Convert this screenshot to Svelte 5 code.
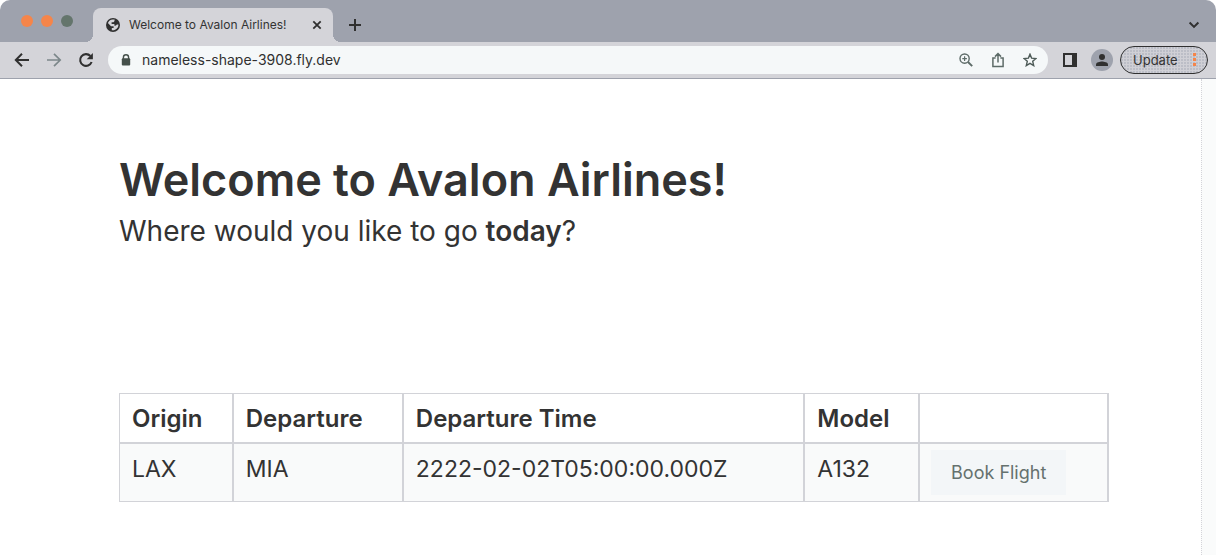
<script>
  const columns = [
    { label: 'Origin', width: 11.5 },
    { label: 'Departure', width: 17.2 },
    { label: 'Departure Time', width: 40.6 },
    { label: 'Model', width: 11.6 },
    { label: '', width: 19.1 }
  ];
  const flights = [
    { origin: 'LAX', departure: 'MIA', time: '2222-02-02T05:00:00.000Z', model: 'A132' }
  ];
  let address = $state('nameless-shape-3908.fly.dev');
</script>

<div class="window">
  <header class="chrome">
    <div class="tabstrip">
      <div class="lights">
        <span class="light"></span>
        <span class="light"></span>
        <span class="light zoomed"></span>
      </div>
      <div class="tab">
        <svg class="globe" width="14" height="14" viewBox="0 0 14 14" aria-hidden="true">
          <circle cx="7" cy="7" r="7" fill="#303030" />
          <path d="M8.6 1.6 H6.6 C4.4 1.8 2.6 3.2 1.9 5 L5 8.2 H7.6 V10 H5.8 V12.3 C9.6 12.8 12.6 10 12.4 6.6 H10.8 C10.4 7.6 9.2 8.2 8.4 7.4 V6 H5.6 V4.2 H7.4 C8.4 4 8.6 3 8.6 1.6 Z" fill="#d4d4d9" />
        </svg>
        <span class="title">Welcome to Avalon Airlines!</span>
        <button class="icon" aria-label="Close tab">
          <svg width="10" height="10" viewBox="0 0 10 10"><path d="M1.3 1.3 L8.7 8.7 M8.7 1.3 L1.3 8.7" stroke="#303030" stroke-width="1.8" fill="none" /></svg>
        </button>
      </div>
      <button class="icon newtab" aria-label="New tab">
        <svg width="14" height="14" viewBox="0 0 14 14"><path d="M7 1 V13 M1 7 H13" stroke="#303030" stroke-width="2" fill="none" /></svg>
      </button>
      <button class="icon tabsearch" aria-label="Search tabs">
        <svg width="12" height="8" viewBox="0 0 12 8"><path d="M1.6 1.5 L6 5.9 L10.4 1.5" stroke="#303030" stroke-width="2" fill="none" /></svg>
      </button>
    </div>

    <div class="toolbar">
      <nav class="history">
        <button class="icon" aria-label="Back">
          <svg width="16" height="16" viewBox="0 0 16 16"><path d="M15 8 H2 M8 1.8 L1.8 8 L8 14.2" stroke="#303030" stroke-width="2" fill="none" /></svg>
        </button>
        <button class="icon" aria-label="Forward">
          <svg width="16" height="16" viewBox="0 0 16 16"><path d="M1 8 H14 M8 1.8 L14.2 8 L8 14.2" stroke="#7c878a" stroke-width="1.7" fill="none" /></svg>
        </button>
        <button class="icon" aria-label="Reload">
          <svg width="16" height="16" viewBox="0 0 16 16"><path d="M13.6 10 A5.9 5.9 0 1 1 12.4 4" stroke="#303030" stroke-width="2.1" fill="none" /><path d="M14.9 1 V7.2 H8.7 Z" fill="#303030" /></svg>
        </button>
      </nav>

      <div class="omnibox">
        <svg class="lock" width="10" height="12" viewBox="0 0 10 12" aria-hidden="true">
          <path d="M2.4 5 V3.4 A2.6 2.6 0 0 1 7.6 3.4 V5" stroke="#45504b" stroke-width="1.4" fill="none" />
          <rect x="0.8" y="4.2" width="8.4" height="7.4" rx="1" fill="#45504b" />
        </svg>
        <input type="text" aria-label="Address" bind:value={address} />
        <button class="icon" aria-label="Page zoom">
          <svg width="14" height="14" viewBox="0 0 14 14" fill="none" stroke="#5d6b68"><circle cx="5.6" cy="5.6" r="4.6" stroke-width="1.4" /><path d="M9 9 L13.2 13.2" stroke-width="1.9" /><path d="M5.6 3.3 V7.9 M3.3 5.6 H7.9" stroke-width="1.2" /></svg>
        </button>
        <button class="icon" aria-label="Share this page">
          <svg width="14" height="16" viewBox="0 0 14 16" fill="none" stroke="#5d6b68" stroke-width="1.5"><path d="M4.6 6 H1.9 V14.4 H12.1 V6 H9.4 M7 10.6 V2 M4 4.6 L7 1.6 L10 4.6" /></svg>
        </button>
        <button class="icon" aria-label="Bookmark this page">
          <svg width="14" height="14" viewBox="0 0 14 14" fill="none" stroke="#4e5b58" stroke-width="1.4"><path d="M7 1.2 L8.6 5.1 L13 5.5 L9.7 8.3 L10.7 12.6 L7 10.3 L3.3 12.6 L4.3 8.3 L1 5.5 L5.4 5.1 Z" /></svg>
        </button>
      </div>

      <button class="icon panel" aria-label="Side panel">
        <svg width="14" height="14" viewBox="0 0 14 14"><path d="M0 0 H14 V14 H0 Z M2 2 V12 H9 V2 Z" fill="#303030" fill-rule="evenodd" /></svg>
      </button>
      <button class="icon avatar" aria-label="Profile">
        <svg width="12" height="12" viewBox="0 0 12 12"><circle cx="6" cy="3" r="3" fill="#303030" /><path d="M0 12 V10.4 C0 8.4 4 7.5 6 7.5 C8 7.5 12 8.4 12 10.4 V12 Z" fill="#303030" /></svg>
      </button>
      <button class="update">
        <span>Update</span>
        <svg width="3" height="14" viewBox="0 0 3 14" aria-hidden="true"><path d="M0 0 H3 V3 H0 Z M0 5 H3 V8 H0 Z M0 10 H3 V13 H0 Z" fill="#f5854a" /></svg>
      </button>
    </div>
  </header>

  <div class="viewport">
    <main>
      <h1>Welcome to Avalon Airlines!</h1>
      <p>Where would you like to go <strong>today</strong>?</p>
      <table>
        <colgroup>
          {#each columns as column}
            <col style="width: {column.width}%" />
          {/each}
        </colgroup>
        <thead>
          <tr>
            {#each columns as column}
              <th scope="col">{column.label}</th>
            {/each}
          </tr>
        </thead>
        <tbody>
          {#each flights as flight}
            <tr>
              <td>{flight.origin}</td>
              <td>{flight.departure}</td>
              <td>{flight.time}</td>
              <td>{flight.model}</td>
              <td class="action"><button class="book">Book Flight</button></td>
            </tr>
          {/each}
        </tbody>
      </table>
    </main>
    <div class="scrollbar"></div>
  </div>
</div>

<style>
  :global(body) {
    margin: 0;
    background: #fff;
  }
  .window {
    display: flex;
    flex-direction: column;
    min-height: 100vh;
    font-family: Inter, "Liberation Sans", sans-serif;
    color: #333;
  }
  button {
    font: inherit;
    color: inherit;
    border: 0;
    padding: 0;
    background: none;
  }
  .icon {
    display: flex;
    align-items: center;
    justify-content: center;
    flex: none;
  }
  .chrome {
    border-radius: 10px 10px 0 0;
    overflow: hidden;
    border-bottom: 1px solid #9ea2ad;
  }
  .tabstrip {
    display: flex;
    align-items: flex-end;
    height: 42px;
    background: #9ea2ad;
  }
  .lights {
    display: flex;
    gap: 8px;
    align-self: center;
    padding: 0 20px 0 21px;
  }
  .light {
    width: 12px;
    height: 12px;
    border-radius: 50%;
    background: #f5854a;
  }
  .light.zoomed {
    background: #64756c;
  }
  .tab {
    position: relative;
    display: flex;
    align-items: center;
    box-sizing: border-box;
    width: 240px;
    height: 34px;
    padding: 0 11px 0 13px;
    border-radius: 8px 8px 0 0;
    background: #d4d4d9;
  }
  .tab::before,
  .tab::after {
    content: "";
    position: absolute;
    bottom: 0;
    width: 8px;
    height: 8px;
  }
  .tab::before {
    left: -8px;
    background: radial-gradient(circle at 0 0, transparent 8px, #d4d4d9 8px);
  }
  .tab::after {
    right: -8px;
    background: radial-gradient(circle at 100% 0, transparent 8px, #d4d4d9 8px);
  }
  .title {
    flex: 1;
    margin-left: 9px;
    padding-bottom: 2px;
    font-size: 12px;
    white-space: nowrap;
  }
  .newtab {
    height: 34px;
    margin-left: 15px;
  }
  .tabsearch {
    height: 34px;
    margin: 0 16px 0 auto;
  }
  .toolbar {
    display: flex;
    align-items: center;
    height: 36px;
    padding: 0 8px 0 14px;
    background: #d4d4d9;
  }
  .history {
    display: flex;
    gap: 16px;
    margin-right: 14px;
  }
  .omnibox {
    display: flex;
    align-items: center;
    flex: 1;
    gap: 18px;
    height: 28px;
    padding: 0 11px 0 13px;
    border-radius: 14px;
    background: #f5f8f9;
  }
  .lock {
    margin-right: -7px;
  }
  input {
    flex: 1;
    min-width: 0;
    padding: 0 0 2px;
    border: 0;
    outline: 0;
    background: none;
    font: 14px Inter, "Liberation Sans", sans-serif;
    color: #303030;
  }
  .panel {
    margin: 0 14px 0 15px;
  }
  .avatar {
    width: 22px;
    height: 22px;
    margin-right: 7px;
    border-radius: 50%;
    background: #9ea2ad;
  }
  .update {
    display: flex;
    align-items: center;
    justify-content: space-between;
    box-sizing: border-box;
    width: 88px;
    height: 28px;
    padding: 0 11px 0 12px;
    border: 1px solid #303030;
    border-radius: 14px;
    background-color: #d0d0d6;
    background-image: radial-gradient(circle at 1px 1px, #bcbec7 1px, transparent 1px);
    background-size: 3px 3px;
    font-size: 13px;
  }
  .update svg {
    flex: none;
  }
  .viewport {
    display: flex;
    flex: 1;
  }
  main {
    flex: 1;
    padding: 75px 92px 24px 119px;
  }
  .scrollbar {
    width: 14px;
    border-left: 1px dotted #d4d4d9;
    background: #fafbfb;
  }
  h1 {
    margin: 0;
    font-size: 45px;
    line-height: 52px;
    font-weight: 600;
  }
  p {
    margin: 5px 0 0;
    font-size: 28px;
    line-height: 40px;
  }
  strong {
    font-weight: 600;
  }
  table {
    width: 100%;
    margin-top: 142px;
    border-collapse: separate;
    border-spacing: 0;
    table-layout: fixed;
    border: solid #d2d3d8;
    border-width: 1px 0 0 1px;
    font-size: 23px;
    line-height: 32px;
  }
  th,
  td {
    padding: 9px 12px 7px;
    border-right: 2px solid #d2d3d8;
    text-align: left;
    vertical-align: top;
  }
  th {
    height: 32px;
    border-bottom: 2px solid #d2d3d8;
    font-size: 24px;
    font-weight: 600;
  }
  td {
    border-bottom: 1px solid #d2d3d8;
    background: #f9fafa;
  }
  td.action {
    padding: 6px 11px;
  }
  .book {
    display: block;
    height: 45px;
    padding: 0 20px;
    background: #f3f6f8;
    color: #65716e;
    font-size: 18px;
  }
</style>
